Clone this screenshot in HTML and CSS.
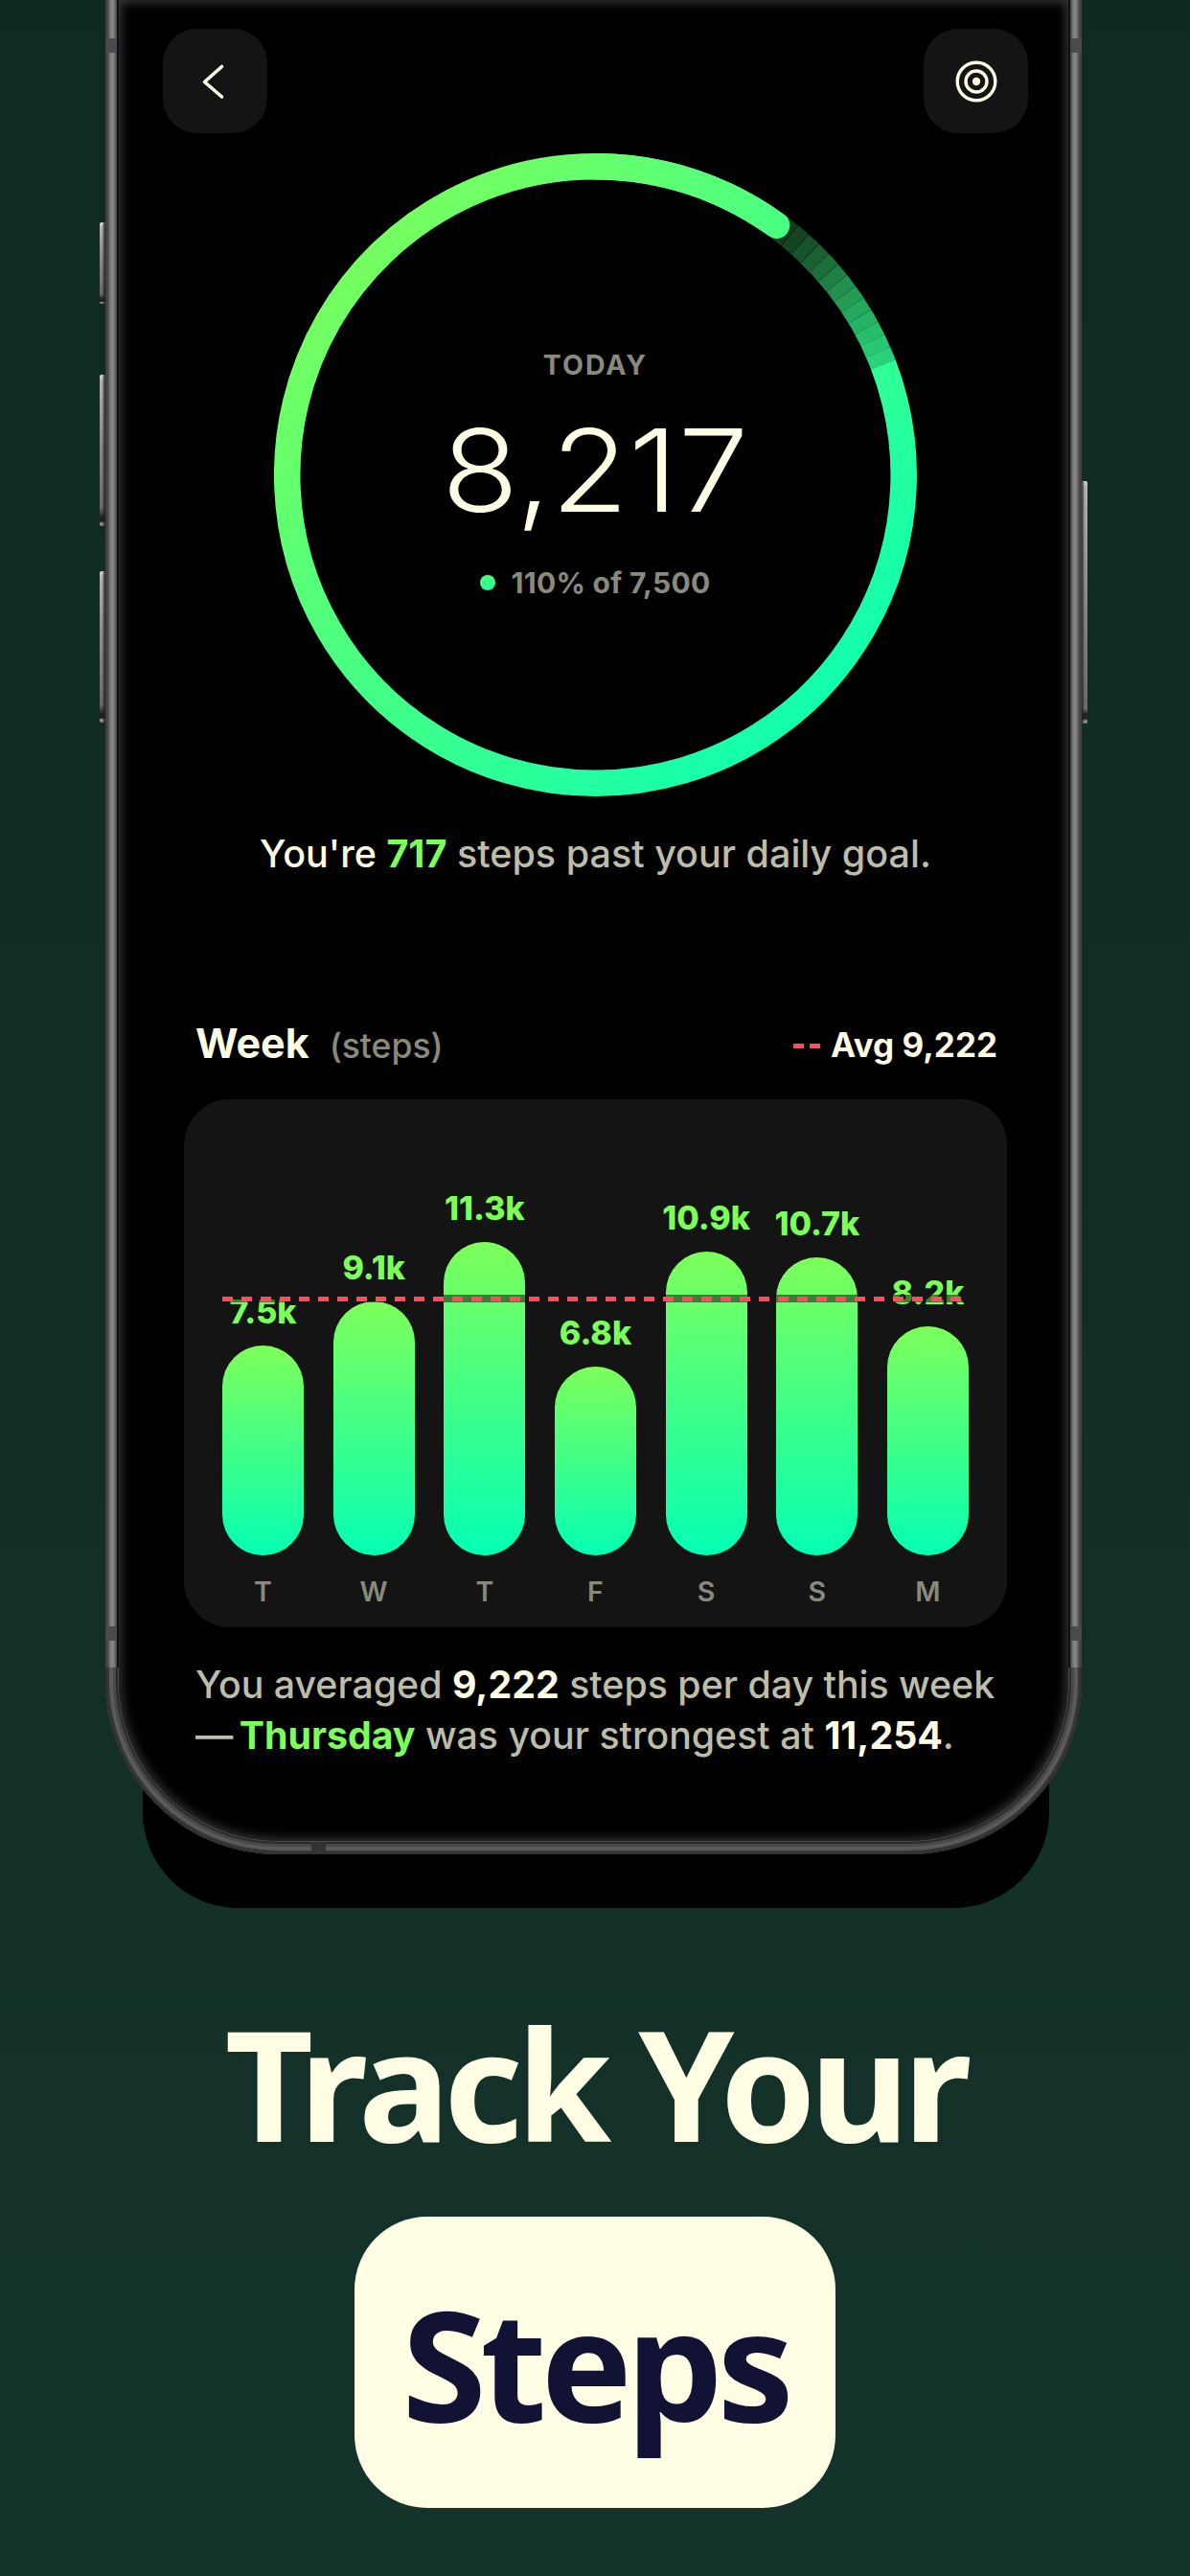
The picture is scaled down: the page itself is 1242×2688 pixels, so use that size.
FILE: index.html
```html
<!DOCTYPE html>
<html lang="en">
<head>
<meta charset="utf-8">
<title>Track Your Steps</title>
<link rel="stylesheet" href="styles.css">
</head>
<body>
<main class="stage">
  <section class="phone">
    <div class="backing"></div>
    <span class="side-key key-l1"></span>
    <span class="side-key key-l2"></span>
    <span class="side-key key-l3"></span>
    <span class="side-key key-r1"></span>
    <span class="rail rail-l"></span>
    <span class="rail rail-r"></span>
    <span class="band band-lt"></span>
    <span class="band band-rt"></span>
    <span class="band band-lb"></span>
    <span class="band band-rb"></span>
    <span class="band-h"></span>
    <div class="screen">
      <header class="topbar">
        <div class="icon-btn">
          <svg class="icon" viewBox="0 0 40 40" width="40" height="40"><polyline points="26.5,4.5 8.5,20.5 26.5,36" fill="none" stroke="#fffde4" stroke-width="3.6" stroke-linecap="round" stroke-linejoin="round"/></svg>
        </div>
        <div class="icon-btn">
          <svg class="icon" viewBox="0 0 44 44" width="44" height="44"><g fill="none" stroke="#fffde4" stroke-width="3.4"><circle cx="22" cy="22" r="19.8"/><circle cx="22" cy="22" r="11"/></g><circle cx="22" cy="22" r="4.2" fill="#fffde4"/></svg>
        </div>
      </header>

      <div class="ring-wrap">
        <svg class="ring" viewBox="0 0 671 671" width="671" height="671">
          <defs>
            <linearGradient id="ringGrad" gradientUnits="userSpaceOnUse" x1="60" y1="60" x2="611" y2="611">
              <stop offset="0" stop-color="#7dff5a"/>
              <stop offset="1" stop-color="#0affb4"/>
            </linearGradient>
          </defs>
          <path class="ring-lap" d="M335.5 13.75 A321.75 321.75 0 1 1 335.4 13.75 Z"/>
          <g class="ring-shade" transform="rotate(-90 335.5 335.5)">
            <circle cx="335.5" cy="335.5" r="321.75" pathLength="360" stroke-dasharray="2.6 357.4" stroke-dashoffset="-34" stroke-opacity=".78"/>
            <circle cx="335.5" cy="335.5" r="321.75" pathLength="360" stroke-dasharray="2.6 357.4" stroke-dashoffset="-36.5" stroke-opacity=".76"/>
            <circle cx="335.5" cy="335.5" r="321.75" pathLength="360" stroke-dasharray="2.6 357.4" stroke-dashoffset="-39" stroke-opacity=".73"/>
            <circle cx="335.5" cy="335.5" r="321.75" pathLength="360" stroke-dasharray="2.6 357.4" stroke-dashoffset="-41.5" stroke-opacity=".68"/>
            <circle cx="335.5" cy="335.5" r="321.75" pathLength="360" stroke-dasharray="2.6 357.4" stroke-dashoffset="-44" stroke-opacity=".62"/>
            <circle cx="335.5" cy="335.5" r="321.75" pathLength="360" stroke-dasharray="2.6 357.4" stroke-dashoffset="-46.5" stroke-opacity=".56"/>
            <circle cx="335.5" cy="335.5" r="321.75" pathLength="360" stroke-dasharray="2.6 357.4" stroke-dashoffset="-49" stroke-opacity=".5"/>
            <circle cx="335.5" cy="335.5" r="321.75" pathLength="360" stroke-dasharray="2.6 357.4" stroke-dashoffset="-51.5" stroke-opacity=".44"/>
            <circle cx="335.5" cy="335.5" r="321.75" pathLength="360" stroke-dasharray="2.6 357.4" stroke-dashoffset="-54" stroke-opacity=".39"/>
            <circle cx="335.5" cy="335.5" r="321.75" pathLength="360" stroke-dasharray="2.6 357.4" stroke-dashoffset="-56.5" stroke-opacity=".34"/>
            <circle cx="335.5" cy="335.5" r="321.75" pathLength="360" stroke-dasharray="2.6 357.4" stroke-dashoffset="-59" stroke-opacity=".3"/>
            <circle cx="335.5" cy="335.5" r="321.75" pathLength="360" stroke-dasharray="2.6 357.4" stroke-dashoffset="-61.5" stroke-opacity=".26"/>
            <circle cx="335.5" cy="335.5" r="321.75" pathLength="360" stroke-dasharray="2.6 357.4" stroke-dashoffset="-64" stroke-opacity=".22"/>
            <circle cx="335.5" cy="335.5" r="321.75" pathLength="360" stroke-dasharray="2.6 357.4" stroke-dashoffset="-66.5" stroke-opacity=".18"/>
          </g>
          <path class="ring-tip" d="M335.5 13.75 A321.75 321.75 0 0 1 524.6 75.2"/>
        </svg>
        <div class="ring-text">
          <div class="today">TODAY</div>
          <div class="count">8,217</div>
          <div class="percent"><span class="dot"></span>110% of 7,500</div>
        </div>
      </div>

      <p class="goal"><span class="cream">You're</span> <b class="green">717</b> steps past your daily goal.</p>

      <div class="week-head">
        <div class="week-title">Week<span class="unit">(steps)</span></div>
        <div class="avg"><span class="avg-dash"></span>Avg 9,222</div>
      </div>

      <div class="card">
        <div class="bars">
          <div class="col"><span class="val">7.5k</span><span class="bar" style="height:219px"></span></div>
          <div class="col"><span class="val">9.1k</span><span class="bar" style="height:265px"></span></div>
          <div class="col"><span class="val">11.3k</span><span class="bar" style="height:327px"></span></div>
          <div class="col"><span class="val">6.8k</span><span class="bar" style="height:197px"></span></div>
          <div class="col"><span class="val">10.9k</span><span class="bar" style="height:317px"></span></div>
          <div class="col"><span class="val">10.7k</span><span class="bar" style="height:311px"></span></div>
          <div class="col"><span class="val">8.2k</span><span class="bar" style="height:239px"></span></div>
          <div class="avg-line"></div>
        </div>
        <div class="days">
          <span>T</span><span>W</span><span>T</span><span>F</span><span>S</span><span>S</span><span>M</span>
        </div>
      </div>

      <p class="summary">You averaged <b class="cream">9,222</b> steps per day this week<br><span class="dash">—</span> <b class="green">Thursday</b> was your strongest at <b class="cream">11,254</b>.</p>
    </div>
  </section>

  <h1 class="headline">Track Your</h1>
  <div class="pill">Steps</div>
</main>
</body>
</html>
```
FILE: styles.css
```css
* { box-sizing: border-box; }
html, body { margin: 0; padding: 0; }
body { width: 1242px; height: 2688px; overflow: hidden; font-family: Inter, "Liberation Sans", sans-serif; }

.stage {
  width: 1242px;
  height: 2688px;
  isolation: isolate;
  overflow: hidden;
  background: linear-gradient(180deg, #0f2a20 0%, #14332a 100%);
  display: flex;
  flex-direction: column;
  align-items: center;
}

/* device */
.phone {
  position: relative;
  align-self: flex-start;
  margin-left: 110px;
  width: 1019px;
  height: 1935px;
  padding: 0 14px 14px;
  background: #4a4a4c;
  border-radius: 0 0 180px 180px;
  box-shadow: inset 0 0 0 1px #2c2c2e, inset 0 0 0 4px #353537, inset 0 0 0 8px #5a5a5c, inset 0 0 0 11px #48484a, inset 0 0 0 13px #2a2a2c;
  flex: none;
}
.backing {
  position: absolute;
  z-index: -1;
  left: 39px;
  width: 946px;
  bottom: -56px;
  height: 300px;
  background: #000;
  border-radius: 0 0 100px 100px;
}
.side-key {
  position: absolute;
  width: 6px;
  background:
    linear-gradient(90deg, transparent 0, transparent 45%, rgba(30, 30, 30, 0.75) 80%, rgba(30, 30, 30, 0.85) 100%),
    linear-gradient(180deg, #d8d8d8 0, #b0b0b0 6px, #8e8e8e 40%, #6a6a6a 88%, #222 94%, #222 97%, #999 98%, #777 100%);
  border-radius: 2px 0 0 2px;
}
.key-l1 { left: -6px; top: 232px; height: 85px; }
.key-l2 { left: -6px; top: 391px; height: 158px; }
.key-l3 { left: -6px; top: 596px; height: 158px; }
.key-r1 {
  right: -6px;
  top: 502px;
  height: 253px;
  border-radius: 0 2px 2px 0;
  background:
    linear-gradient(90deg, rgba(30, 30, 30, 0.8) 0, rgba(30, 30, 30, 0.6) 20%, transparent 50%, transparent 100%),
    linear-gradient(180deg, #d8d8d8 0, #b0b0b0 6px, #8e8e8e 40%, #6a6a6a 94%, #222 96%, #222 98%, #999 99%, #777 100%);
}

.rail {
  position: absolute;
  top: 0;
  width: 14px;
  height: 1740px;
  z-index: 2;
}
.rail-l { left: 0; background: linear-gradient(90deg, #3e3e40 0, #4a4a4c 3px, #7c7c7c 5px, #868686 8px, #6a6a6a 10px, #4a4a4c 11.5px, #0c0c0c 12.5px, #1a1a1a 14px); }
.rail-r { right: 0; background: linear-gradient(270deg, #3e3e40 0, #4a4a4c 3px, #7c7c7c 5px, #868686 8px, #6a6a6a 10px, #4a4a4c 11.5px, #0c0c0c 12.5px, #1a1a1a 14px); }
.band { position: absolute; z-index: 3; width: 11px; height: 15px; background: #4a4a4e; }
.band-lt { left: 0; top: 40px; }
.band-rt { right: 0; top: 40px; }
.band-lb { left: 0; top: 1697px; }
.band-rb { right: 0; top: 1697px; }
.band-h { position: absolute; z-index: 3; left: 215px; bottom: 2px; width: 15px; height: 11px; background: #333335; }

.screen {
  position: relative;
  height: 1921px;
  background: #000;
  border-radius: 0 0 166px 166px;
  box-shadow: inset 0 0 12px 2px #3a3a3a;
  padding: 30px 42px 0 46px;
  display: flex;
  flex-direction: column;
}

.topbar { display: flex; justify-content: space-between; }
.icon-btn {
  width: 109px;
  height: 109px;
  border-radius: 36px;
  background: #141414;
  display: flex;
  align-items: center;
  justify-content: center;
}
.icon { display: block; }

/* ring */
.ring-wrap {
  margin-top: 21px;
  align-self: center;
  display: grid;
  width: 671px;
  height: 671px;
}
.ring { grid-area: 1 / 1; display: block; }
.ring-lap, .ring-tip { fill: none; stroke: url(#ringGrad); stroke-width: 27.5; }
.ring-tip { stroke-linecap: round; }
.ring-shade circle { fill: none; stroke: #000; stroke-width: 28; }
.ring-text {
  grid-area: 1 / 1;
  display: flex;
  flex-direction: column;
  align-items: center;
  padding-top: 204px;
}
.today { font-size: 28.5px; line-height: 34px; font-weight: 700; letter-spacing: 2px; color: #8a8a7c; }
.count { margin-top: 28px; font-size: 119px; line-height: 130px; font-weight: 300; color: #fffde4; transform: scaleX(1.104); }
.percent { margin-top: 34px; display: flex; align-items: center; font-size: 30px; line-height: 36px; font-weight: 700; letter-spacing: 0.3px; color: #8a8a7c; }
.dot { width: 16px; height: 16px; border-radius: 50%; background: linear-gradient(180deg, #50ff76 0%, #22ffa0 100%); margin-right: 16px; }

.goal {
  margin: 35px 0 0;
  text-align: center;
  font-size: 39.5px;
  line-height: 50px;
  font-weight: 500;
  color: #bdbda8;
  white-space: nowrap;
}
.cream { color: #fffde4; }
.green { color: #7dff5a; }
b { font-weight: 700; }

/* week */
.week-head {
  margin: 144px 32px 0 34px;
  display: flex;
  justify-content: space-between;
  align-items: center;
}
.week-title { font-size: 43px; line-height: 56px; font-weight: 700; color: #fffde4; }
.unit { margin-left: 21px; font-size: 35.5px; font-weight: 500; color: #8a8a7c; }
.avg { font-size: 35px; line-height: 44px; font-weight: 700; color: #fffde4; }
.avg-dash {
  display: inline-block;
  vertical-align: middle;
  position: relative;
  top: -2px;
  width: 28px;
  height: 5px;
  margin-right: 11px;
  background: repeating-linear-gradient(90deg, #ff4d5a 0, #ff4d5a 11px, transparent 11px, transparent 17px);
}

.card {
  margin: 27px 22px 0;
  height: 551px;
  border-radius: 48px;
  background: #141414;
  padding: 0 40px;
}
.bars {
  position: relative;
  height: 476px;
  display: grid;
  grid-template-columns: repeat(7, 85px);
  justify-content: space-between;
}
.col { display: flex; flex-direction: column; align-items: center; justify-content: flex-end; }
.val { font-size: 34px; line-height: 38px; margin-bottom: 16px; font-weight: 800; color: #7dff5a; white-space: nowrap; }
.bar {
  display: block;
  width: 85px;
  border-radius: 42.5px;
  background: linear-gradient(180deg, #7dff5a 0%, #05ffb5 100%);
}
.avg-line {
  position: absolute;
  left: 0;
  width: 773px;
  top: 204px;
  height: 8px;
  background:
    repeating-linear-gradient(90deg, #ff4d5a 0, #ff4d5a 11px, transparent 11px, transparent 20px) 0 1.5px / 100% 5px no-repeat,
    rgba(20, 20, 20, 0.55);
}
.days {
  margin-top: 22px;
  display: grid;
  grid-template-columns: repeat(7, 85px);
  justify-content: space-between;
  text-align: center;
  font-size: 28.5px;
  line-height: 32px;
  font-weight: 600;
  color: #8a8a7c;
}

.summary {
  margin: 33px 0 0 34px;
  font-size: 39.3px;
  line-height: 53px;
  font-weight: 500;
  color: #bdbda8;
  white-space: nowrap;
}
.dash { letter-spacing: -4px; }

/* headline */
.headline {
  margin: 158px 0 0;
  font-family: "Noto Sans", "Open Sans", sans-serif;
  font-size: 160px;
  line-height: 160px;
  font-weight: 700;
  letter-spacing: -6.7px;
  color: #fffde4;
  white-space: nowrap;
}
.pill {
  margin-top: 60px;
  width: 502px;
  height: 304px;
  border-radius: 76px;
  background: #fffde4;
  color: #121235;
  font-family: "Noto Sans", "Open Sans", sans-serif;
  font-size: 160px;
  font-weight: 700;
  letter-spacing: -6.3px;
  display: flex;
  align-items: center;
  justify-content: center;
}
```
